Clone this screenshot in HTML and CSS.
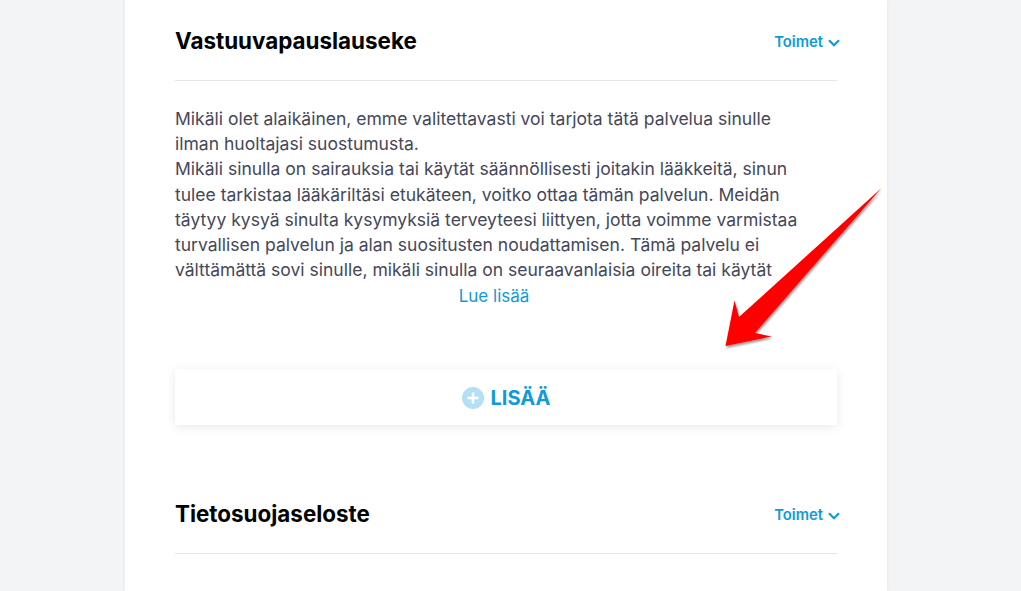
FILE: index.html
```html
<!DOCTYPE html>
<html lang="fi">
<head>
<meta charset="utf-8">
<title>Vastuuvapauslauseke</title>
<link rel="stylesheet" href="styles.css">
</head>
<body>
<main class="card">
  <section class="section">
    <header class="section-head">
      <h2 class="section-title">Vastuuvapauslauseke</h2>
      <a class="actions">Toimet
        <svg class="chevron" viewBox="0 0 12 8" width="12" height="8"><path d="M1 1.2 6 6.2l5-5" fill="none" stroke="#0f9bd7" stroke-width="2.2"/></svg>
      </a>
    </header>
    <div class="section-body">
      <p class="text">Mikäli olet alaikäinen, emme valitettavasti voi tarjota tätä palvelua sinulle<br>ilman huoltajasi suostumusta.<br>Mikäli sinulla on sairauksia tai käytät säännöllisesti joitakin lääkkeitä, sinun<br>tulee tarkistaa lääkäriltäsi etukäteen, voitko ottaa tämän palvelun. Meidän<br>täytyy kysyä sinulta kysymyksiä terveyteesi liittyen, jotta voimme varmistaa<br>turvallisen palvelun ja alan suositusten noudattamisen. Tämä palvelu ei<br>välttämättä sovi sinulle, mikäli sinulla on seuraavanlaisia oireita tai käytät</p>
      <a class="read-more">Lue lisää</a>
    </div>
    <button class="add-button">
      <svg class="plus" viewBox="0 0 22 22" width="22" height="22"><circle cx="11" cy="11" r="11" fill="#b3e0f4"/><path d="M11 5.5v11M5.5 11h11" stroke="#fff" stroke-width="2.6"/></svg>
      <span>LISÄÄ</span>
    </button>
  </section>
  <section class="section section-next">
    <header class="section-head">
      <h2 class="section-title">Tietosuojaseloste</h2>
      <a class="actions">Toimet
        <svg class="chevron" viewBox="0 0 12 8" width="12" height="8"><path d="M1 1.2 6 6.2l5-5" fill="none" stroke="#0f9bd7" stroke-width="2.2"/></svg>
      </a>
    </header>
  </section>
</main>
<svg class="arrow" viewBox="0 0 1021 591" width="1021" height="591">
  <defs><filter id="shadow" x="-20%" y="-20%" width="140%" height="140%"><feDropShadow dx="1" dy="2" stdDeviation="1" flood-color="#000" flood-opacity="0.4"/></filter></defs>
  <polygon points="881.5,188 739,317 734.5,300.5 725.5,346 771.5,336.5 755,333" fill="#ff0000" filter="url(#shadow)"/>
</svg>
</body>
</html>
```
FILE: styles.css
```css
html, body {
  margin: 0;
  height: 591px;
  overflow: hidden;
}
body {
  background: #f3f4f6;
  font-family: Inter, "Liberation Sans", sans-serif;
  position: relative;
}
.card {
  width: 662px;
  height: 591px;
  margin-left: 125px;
  padding: 0 50px;
  background: #fff;
  box-shadow: 0 0 4px rgba(0, 0, 0, 0.07);
}
.section-head {
  height: 78px;
  display: flex;
  justify-content: space-between;
  align-items: center;
  border-bottom: 1px solid #e5e7eb;
  padding-top: 2px;
}
.section-title {
  margin: 0 0 2px;
  font-size: 22.4px;
  font-weight: 700;
  color: #000;
}
.actions {
  display: flex;
  align-items: center;
  gap: 5px;
  font-size: 14.8px;
  font-weight: 600;
  color: #0f9bd7;
  margin-right: -3px;
  padding-top: 2px;
}
.chevron { margin-top: 1px; }
.section-body {
  padding-top: 25px;
}
.text {
  margin: 0;
  font-size: 17.53px;
  line-height: 25.2px;
  color: #45475a;
}
.read-more {
  display: block;
  text-align: center;
  font-size: 17px;
  line-height: 25px;
  color: #0f9bd7;
  margin-top: 2px;
  margin-left: -24px;
}
.add-button {
  display: flex;
  width: 100%;
  height: 56px;
  margin-top: 60px;
  align-items: center;
  justify-content: center;
  gap: 7px;
  border: 0;
  background: #fff;
  box-shadow: 0 2px 10px rgba(0, 0, 0, 0.09);
  font-family: inherit;
  font-size: 20px;
  font-weight: 700;
  color: #0f9bd7;
  padding: 2px 0 0;
}
.section-next { margin-top: 48px; }
.arrow {
  position: absolute;
  left: 0;
  top: 0;
  pointer-events: none;
}
```
